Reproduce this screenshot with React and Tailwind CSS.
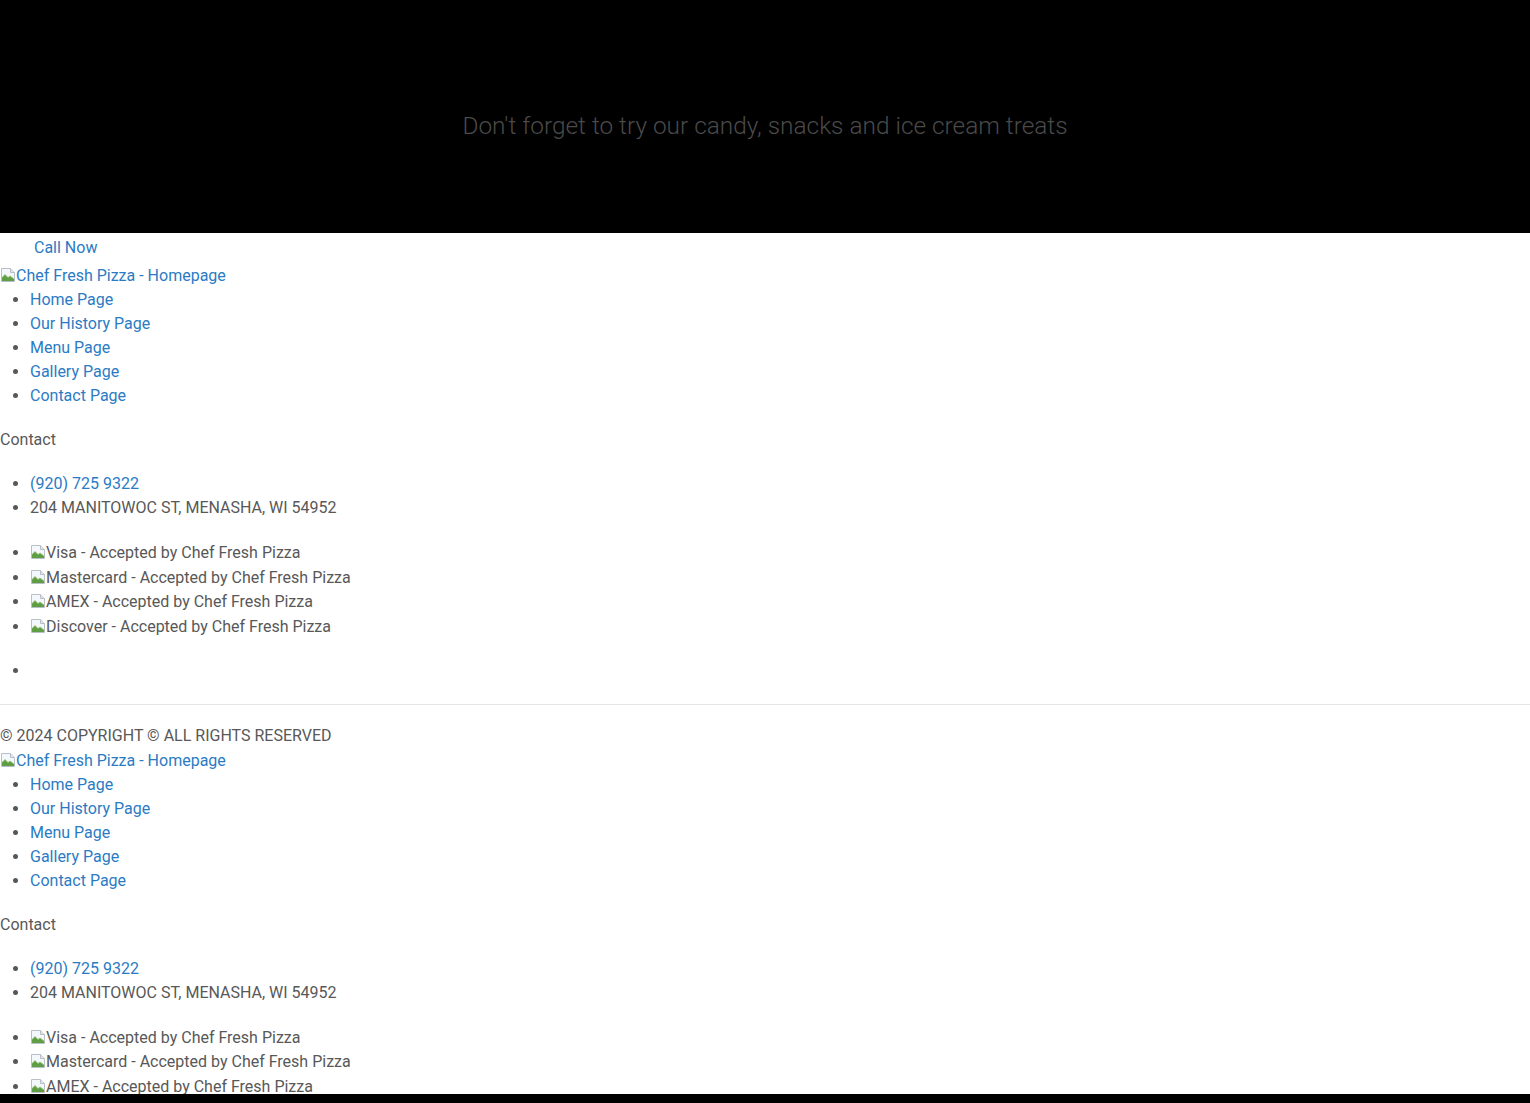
import React from "react";

const navLinks = ["Home Page", "Our History Page", "Menu Page", "Gallery Page", "Contact Page"];
const cards = ["Visa", "Mastercard", "AMEX", "Discover"];

// the browser's broken image glyph
const BrokenImg = () => (
  <svg width="16" height="16" viewBox="0 0 16 16" className="inline-block align-[-2px]">
    <path d="M1.5 1.5h9l4 4v9h-13z" fill="#f4f7fb" stroke="#b9bfc7" />
    <path d="M10.5 1.5v4h4" fill="#e2e6ec" stroke="#b9bfc7" />
    <path d="M2 14V10.5l3-3 3 3 2-1.5 4 3V14z" fill="#5f9e45" />
    <path d="M2 10.5l3-3 3 3 2-1.5 4 3" fill="none" stroke="#8fc46a" strokeWidth="0.8" />
  </svg>
);

const Logo = ({ className }) => (
  <div className={className}>
    <a href="#" className="text-[#2b7bc4] leading-6">
      <BrokenImg />
      Chef Fresh Pizza - Homepage
    </a>
  </div>
);

const FooterBlock = ({ top }) => (
  <div>
    <Logo className={top} />
    <ul className="list-disc pl-[30px] text-[#585858]">
      {navLinks.map((l) => (
        <li key={l} className="leading-6">
          <a href="#" className="text-[#2b7bc4]">{l}</a>
        </li>
      ))}
    </ul>
    <p className="mt-5 leading-6 text-[#585858]">Contact</p>
    <ul className="mt-5 list-disc pl-[30px] text-[#585858]">
      <li className="leading-6">
        <a href="#" className="text-[#2b7bc4]">(920) 725 9322</a>
      </li>
      <li className="leading-6">204 MANITOWOC ST, MENASHA, WI 54952</li>
    </ul>
    <ul className="mt-[21px] list-disc pl-[30px] text-[#585858]">
      {cards.map((c) => (
        <li key={c} className="h-[24.67px] leading-[24.67px]">
          <BrokenImg />
          {c} - Accepted by Chef Fresh Pizza
        </li>
      ))}
    </ul>
    <ul className="mt-[19px] list-disc pl-[30px] text-[#585858]">
      <li className="h-6"></li>
    </ul>
  </div>
);

export default function App() {
  return (
    <div className="min-h-screen bg-white text-base font-['Roboto',_'Liberation_Sans',_sans-serif] pb-24">
      <section className="h-[233px] bg-black flex items-center justify-center">
        <p className="mt-[19px] text-[24.4px] font-light text-[#4a4a4a]">
          Don't forget to try our candy, snacks and ice cream treats
        </p>
      </section>

      <div className="mt-[3px] pl-[34px] leading-6">
        <a href="#" className="text-[#2b7bc4]">Call Now</a>
      </div>

      <FooterBlock top="pt-1" />

      <div className="mt-[21px] border-t border-[#e4e4e4]"></div>
      <p className="mt-[19px] leading-6 text-[#585858]">© 2024 COPYRIGHT © ALL RIGHTS RESERVED</p>

      <FooterBlock top="pt-[1px]" />

      <div className="fixed bottom-0 left-0 right-0 h-[9px] bg-black"></div>
    </div>
  );
}
